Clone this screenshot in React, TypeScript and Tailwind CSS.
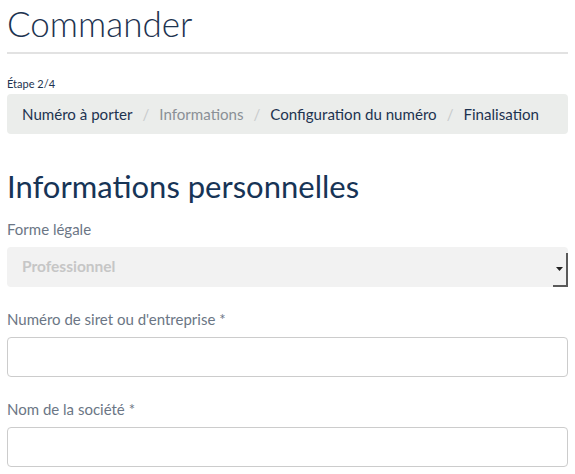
import React from "react";

const STEPS = [
  { label: "Numéro à porter", active: false },
  { label: "Informations", active: true },
  { label: "Configuration du numéro", active: false },
  { label: "Finalisation", active: false },
];

function Breadcrumb() {
  return (
    <div className="flex items-center h-10 px-[15px] bg-[#ebedeb] rounded text-[15.1px]">
      {STEPS.map((s, i) => (
        <React.Fragment key={s.label}>
          {i > 0 && <span className="px-[10px] text-[#c8cbcb]">/</span>}
          <span className={s.active ? "text-[#8a9096]" : "text-[#1d3350]"}>{s.label}</span>
        </React.Fragment>
      ))}
    </div>
  );
}

function Field({ label, children }: { label: string; children: React.ReactNode }) {
  return (
    <div className="mb-[22px]">
      <label className="block text-[15px] text-[#6b7685] mb-[8px] leading-[20px]">{label}</label>
      {children}
    </div>
  );
}

export default function App() {
  return (
    <div className="px-[7px] bg-white min-h-screen text-[#1d3350]" style={{ fontFamily: "Lato, 'Noto Sans', sans-serif" }}>
      <h1 className="text-[35px] font-light leading-[44px] pt-[1px] text-[#1d3350]">Commander</h1>
      <hr className="mt-[7px] border-0 h-[2px] bg-[#e2e2e2]" />
      <div className="mt-[23px] text-[11px] leading-[14px] mb-[3px]">Étape 2/4</div>
      <Breadcrumb />
      <h2 className="mt-[32px] text-[31px] leading-[40px] text-[#173456]">Informations personnelles</h2>
      <div className="mt-[13px]">
        <Field label="Forme légale">
          <div className="relative h-10 bg-[#f2f2f2] rounded flex items-center px-[15px]">
            <span className="text-[15.5px] font-bold text-[#c6c6c6]">Professionnel</span>
            <div className="absolute right-0 top-[6px] bottom-0 w-[15px] border-r-2 border-b-2 border-[#5a5a5a] flex items-center justify-center">
              <svg width="7" height="4" viewBox="0 0 7 4"><path d="M0 0h7L3.5 4z" fill="#222" /></svg>
            </div>
          </div>
        </Field>
        <Field label="Numéro de siret ou d'entreprise *">
          <input className="block w-full h-10 border border-[#cccccc] rounded px-3 outline-none" />
        </Field>
        <Field label="Nom de la société *">
          <input className="block w-full h-10 border border-[#cccccc] rounded px-3 outline-none" />
        </Field>
      </div>
    </div>
  );
}
